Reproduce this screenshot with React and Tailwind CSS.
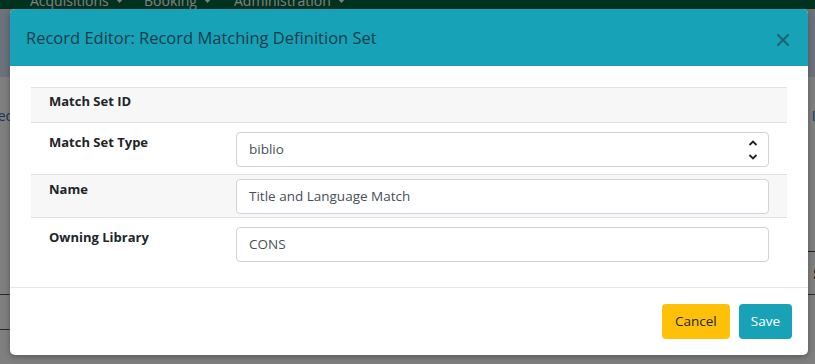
import React from 'react'

const font = { fontFamily: '"Open Sans", "Noto Sans", sans-serif' }

const Row = ({ label, shaded, rowClass, labelClass, children }) => (
  <div className={`flex border-b border-[#dee2e6] ${shaded ? 'bg-[#f7f7f7]' : 'bg-white'} ${rowClass}`}>
    <div className={`w-[205px] shrink-0 pl-[18px] text-[13px] leading-[20px] font-bold text-[#212529] ${labelClass}`}>
      {label}
    </div>
    <div className="flex-1 pr-[18px]">{children}</div>
  </div>
)

const TextInput = ({ value, className }) => (
  <div className={`flex items-center h-[35px] px-[12px] rounded-[4px] border border-[#ced4da] bg-white text-[13.5px] text-[#495057] ${className}`}>
    {value}
  </div>
)

const Caret = () => (
  <svg width="9" height="5" viewBox="0 0 9 5" className="inline-block ml-[6px] mb-[3px]">
    <path d="M0 0 L9 0 L4.5 5 Z" fill="currentColor" />
  </svg>
)

const App = () => {
  return (
    <div className="relative w-[815px] h-[364px] overflow-hidden bg-white" style={font}>
      {/* page behind the modal */}
      <div className="h-[9px] bg-[#00663f] overflow-hidden">
        <div className="flex pl-[30px] mt-[-8px] text-[14px] leading-[18px] text-white">
          <span className="w-[114px]">Acquisitions<Caret /></span>
          <span className="w-[90px]">Booking<Caret /></span>
          <span>Administration<Caret /></span>
        </div>
      </div>
      <div className="h-[3px] bg-[#e4e4e4]" />
      <div className="h-[65px] bg-[#d8e2f6]" />
      <div className="h-[28px]" />
      <div className="flex justify-between h-[20px] items-center text-[14px] text-[#3a66c4]">
        <span className="ml-[-10px]">Sec</span>
        <span className="mr-[-14px]">Inf</span>
      </div>
      <div className="h-[126px]" />
      <div className="flex justify-end">
        <div className="w-[10px] border-t border-[#444]" />
      </div>
      <div className="flex justify-end h-[42px] items-center">
        <span className="mr-[-6px] text-[14px] font-bold text-[#222]">S</span>
      </div>
      <div className="border-t border-[#555]" />
      <div className="h-[34px]" />
      <div className="w-[10px] border-t border-[#555]" />

      {/* backdrop + modal */}
      <div className="absolute inset-0 bg-black/50 pt-[9px] pl-[10px]">
        <div className="w-[798px] rounded-[5px] overflow-hidden bg-white shadow-[0_2px_6px_rgba(0,0,0,0.3)]">
          <div className="flex items-center justify-between h-[57px] bg-[#17a2b8] pl-[16px] pr-[19px]">
            <h5 className="text-[16.5px] text-[#163f4b] leading-[24px]">
              Record Editor: Record Matching Definition Set
            </h5>
            <svg width="12" height="12" viewBox="0 0 12 12" className="mt-[5px]">
              <path d="M1 1 L11 11 M11 1 L1 11" stroke="#1d6270" strokeWidth="2" strokeLinecap="round" />
            </svg>
          </div>

          <div className="pt-[21px] pb-[16px] px-[21px]">
            <div className="border-t border-[#dee2e6]">
              <Row label="Match Set ID" shaded rowClass="h-[35px]" labelClass="pt-[3px]" />
              <Row label="Match Set Type" rowClass="pt-[9px] pb-[7px]">
                <div className="flex items-center justify-between h-[35px] pl-[12px] pr-[10px] rounded-[4px] border border-[#ced4da] bg-white text-[13.5px] text-[#495057]">
                  <span>biblio</span>
                  <svg width="10" height="22" viewBox="0 0 10 22">
                    <path d="M1.5 6 L5 2.5 L8.5 6" fill="none" stroke="#222" strokeWidth="1.8" />
                    <path d="M1.5 16 L5 19.5 L8.5 16" fill="none" stroke="#222" strokeWidth="1.8" />
                  </svg>
                </div>
              </Row>
              <Row label="Name" shaded rowClass="pt-[4px] pb-[3px]">
                <TextInput value="Title and Language Match" className="h-[34px]" />
              </Row>
              <Row label="Owning Library" rowClass="pt-[9px] pb-[9px] border-b-0">
                <TextInput value="CONS" />
              </Row>
            </div>
          </div>

          <div className="flex justify-end gap-[9px] border-t border-[#e5e7e9] pt-[16px] pb-[16px] pr-[16px]">
            <button className="h-[35px] px-[13px] rounded-[4px] bg-[#ffc107] text-[13.5px] text-[#212529]">
              Cancel
            </button>
            <button className="h-[35px] px-[12px] rounded-[4px] bg-[#17a2b8] text-[13.5px] text-white">
              Save
            </button>
          </div>
        </div>
      </div>
    </div>
  )
}

export default App
